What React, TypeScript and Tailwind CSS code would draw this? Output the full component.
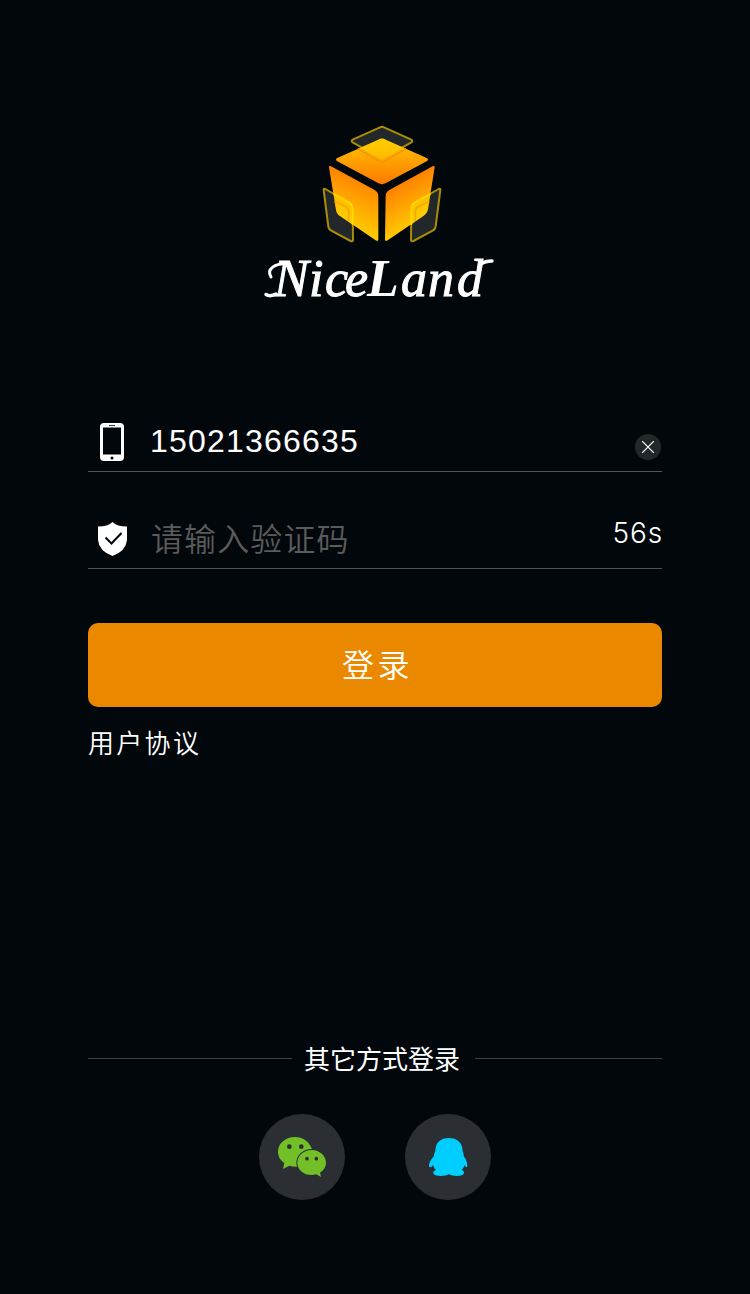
import React from "react";

function CubeLogo() {
  return (
    <svg className="h-[135px] w-[145px]" viewBox="0 0 435 405" fill="none">
      <defs>
        <linearGradient id="top" x1="216" y1="85" x2="216" y2="208" gradientUnits="userSpaceOnUse">
          <stop stopColor="#ffbe00" />
          <stop offset="1" stopColor="#ff7a00" />
        </linearGradient>
        <linearGradient id="left" x1="170" y1="190" x2="110" y2="330" gradientUnits="userSpaceOnUse">
          <stop stopColor="#ff8000" />
          <stop offset="1" stopColor="#ffca00" />
        </linearGradient>
        <linearGradient id="right" x1="255" y1="205" x2="325" y2="325" gradientUnits="userSpaceOnUse">
          <stop stopColor="#ff7c00" />
          <stop offset="1" stopColor="#ffca00" />
        </linearGradient>
      </defs>
      <g fill="#22272a" stroke="#a98d05" strokeWidth="6" strokeLinejoin="round">
        <path d="M210 37Q216 33 222 37L304 74Q310 78 304 82L224 127Q216 132 208 127L128 82Q122 78 128 74Z" />
        <path d="M41 225Q40 219 46 222L116 262Q128 269 128 281L129 375Q128 381 122 378L64 347Q56 343 55 334Z" />
        <path d="M391 225Q392 219 386 222L316 262Q304 269 304 281L303 375Q304 381 310 378L368 347Q376 343 377 334Z" />
      </g>
      <path d="M205 74Q216 67 227 74L350 129Q358 134 350 139L228 204Q216 211 204 204L82 139Q74 134 82 129Z" fill="url(#top)" />
      <path d="M57 157Q57 151 63 154L194 225Q205 231 205 244L205 374Q204 380 197 376L91 304Q80 297 78 284Z" fill="url(#left)" />
      <path d="M374 157Q374 151 368 154L238 225Q227 231 227 244L225 374Q226 380 233 376L341 302Q352 295 354 282Z" fill="url(#right)" />
      <g fill="#ffdc00" fillOpacity=".4">
        <path d="M150 98L205 74Q216 67 227 74L282 98L224 130Q216 135 208 130Z" />
        <path d="M71 238L116 262Q128 269 128 281L128 329L91 304Q80 297 78 284Z" />
        <path d="M361 238L316 262Q304 269 304 281L303 329L341 302Q352 295 354 282Z" />
      </g>
      <g stroke="#f3ac00" strokeWidth="5">
        <path d="M71 237L116 262Q128 269 128 281V329" stroke="#ffdc00" />
        <path d="M361 237L316 262Q304 269 304 281V329" stroke="#ffdc00" />
        <path d="M75 265Q77 259 84 263L107 275Q116 280 116 289V318" />
        <path d="M357 265Q355 259 348 263L325 275Q316 280 316 289V318" />
        <path d="M144 101L206 137Q216 144 226 137L288 101" stroke="#f09a00" />
      </g>
    </svg>
  );
}

function Wordmark() {
  return (
    <svg className="h-[85px] w-[250px]" viewBox="0 -15 250 85">
      <g fill="none" stroke="#fff" strokeLinecap="round" strokeWidth="3">
        <path d="M16 27C11 19 20 13 33 14" />
        <path d="M11 44.5Q15 47 21 44" strokeWidth="3.5" />
        <path d="M226 14Q230 11 237 11" strokeWidth="3.5" />
      </g>
      <text
        x="19 54 70 90 112 146 173 202"
        y="46"
        fill="#fff"
        stroke="#fff"
        strokeWidth="1"
        className="font-['Liberation_Serif'] text-[52px] italic"
      >
        Nice<tspan fontWeight="700" strokeWidth="0">L</tspan>and
      </text>
    </svg>
  );
}

function PhoneIcon() {
  return (
    <svg className="h-[38px] w-6" viewBox="0 0 24 38">
      <path fillRule="evenodd" fill="#fff" d="M4 0H20Q24 0 24 4V34Q24 38 20 38H4Q0 38 0 34V4Q0 0 4 0ZM3 4.5V31.5H21V4.5Z" />
      <path d="M9 2.5H15" stroke="#333" strokeWidth="1" />
      <circle cx="12" cy="35" r="1.5" fill="#02070b" />
    </svg>
  );
}

function ShieldIcon() {
  return (
    <svg className="h-[34px] w-[29px]" viewBox="0 0 29 34">
      <path d="M14.5 0Q19 4.5 29 4.5V18Q28 29 14.5 34Q1 29 0 18V4.5Q10 4.5 14.5 0Z" fill="#fff" />
      <path d="M7.5 15.5L13.5 21.5L23.5 11" fill="none" stroke="#02070b" strokeWidth="2" />
    </svg>
  );
}

function WechatIcon() {
  return (
    <svg className="h-[86px] w-[86px]" viewBox="27 27 258 258">
      <path d="M135 96C107 96 84 115 84 140C84 154 91 166 103 174L99 192L118 182C129 186 140 186 150 184L187 138C183 114 161 96 135 96Z" fill="#72bf27" />
      <path d="M185 135C161 135 142 152 142 173C142 194 161 210 185 210C190 210 194 209 199 208L213 216L210 203C221 196 228 185 228 173C228 152 209 135 185 135Z" fill="#72bf27" stroke="#2b2f33" strokeWidth="6" paintOrder="stroke" />
      <g fill="#2b2f33">
        <circle cx="118" cy="125" r="7" />
        <circle cx="154" cy="125" r="7" />
        <circle cx="171" cy="161" r="5.5" />
        <circle cx="199" cy="161" r="5.5" />
      </g>
    </svg>
  );
}

function QqIcon() {
  return (
    <svg className="h-[86px] w-[86px]" viewBox="465 27 258 258">
      <path
        d="M597 99C571 99 556 113 556 139C554 144 551 148 552 153C543 163 536 174 537 184C539 189 544 187 549 180C551 187 554 191 558 195C549 198 549 202 551 207C556 214 584 215 597 208C610 215 636 214 641 207C643 202 643 198 635 195C640 190 642 186 644 180C647 187 650 189 652 184C652 174 649 163 641 153C642 148 639 144 638 139C638 113 621 99 597 99Z"
        fill="#00ceff"
      />
    </svg>
  );
}

export default function App() {
  return (
    <main className="flex h-[1294px] w-[750px] flex-col bg-[#02070b] px-[88px] pt-[115px] font-['Liberation_Sans','Noto_Sans_CJK_SC',sans-serif] text-white">
      <header className="flex h-[190px] flex-col items-center">
        <div className="ml-[15px]">
          <CubeLogo />
        </div>
        <div className="-mt-[15px] ml-[10px]">
          <Wordmark />
        </div>
      </header>

      <form className="mt-[107px] flex flex-col">
        <div className="flex h-[60px] items-center border-b border-[#50565a]">
          <span className="ml-3"><PhoneIcon /></span>
          <span className="mb-[2px] ml-[26px] flex-1 text-[32px] tracking-[1.2px]">15021366635</span>
          <button type="button" aria-label="清除" className="mt-[11px] mr-px flex size-[26px] items-center justify-center rounded-full bg-[#22272a]">
            <svg className="size-3" viewBox="0 0 12 12" stroke="#fff" strokeWidth="1.2">
              <path d="M0 0L12 12M12 0L0 12" />
            </svg>
          </button>
        </div>

        <div className="flex h-[97px] items-end border-b border-[#505356]">
          <span className="mb-3 ml-[10px]"><ShieldIcon /></span>
          <span className="mb-[7px] ml-6 flex-1 font-['Noto_Sans_CJK_SC',sans-serif] text-[32px] leading-[48px] font-[350] tracking-[1.1px] text-[#5b5b5b]">请输入验证码</span>
          <span className="-mr-px mb-[14px] font-['Inter',sans-serif] text-[28px] leading-[42px] font-[350] tracking-[.9px]">56s</span>
        </div>

        <button type="button" className="mt-[54px] h-[84px] rounded-[10px] bg-[#ea8900] pb-[5px] pl-[5px] font-['Noto_Sans_CJK_SC',sans-serif] text-[32px] font-[350] tracking-[3.5px]">登录</button>
      </form>

      <a className="mt-[15px] font-['Noto_Sans_CJK_SC',sans-serif] text-[26px] leading-[40px] font-[350] tracking-[2.3px]">用户协议</a>

      <footer className="mt-[276px]">
        <div className="flex h-10 items-center">
          <span className="h-px w-[204px] bg-[#3d4144]" />
          <span className="ml-3 flex-1 font-['Noto_Sans_CJK_SC',sans-serif] text-[26px] leading-[40px] whitespace-nowrap">其它方式登录</span>
          <span className="h-px w-[187px] bg-[#3d4144]" />
        </div>
        <div className="mt-9 flex justify-center gap-[60px]">
          <span className="size-[86px] rounded-full bg-[#2b2f33]"><WechatIcon /></span>
          <span className="size-[86px] rounded-full bg-[#2b2f33]"><QqIcon /></span>
        </div>
      </footer>
    </main>
  );
}
